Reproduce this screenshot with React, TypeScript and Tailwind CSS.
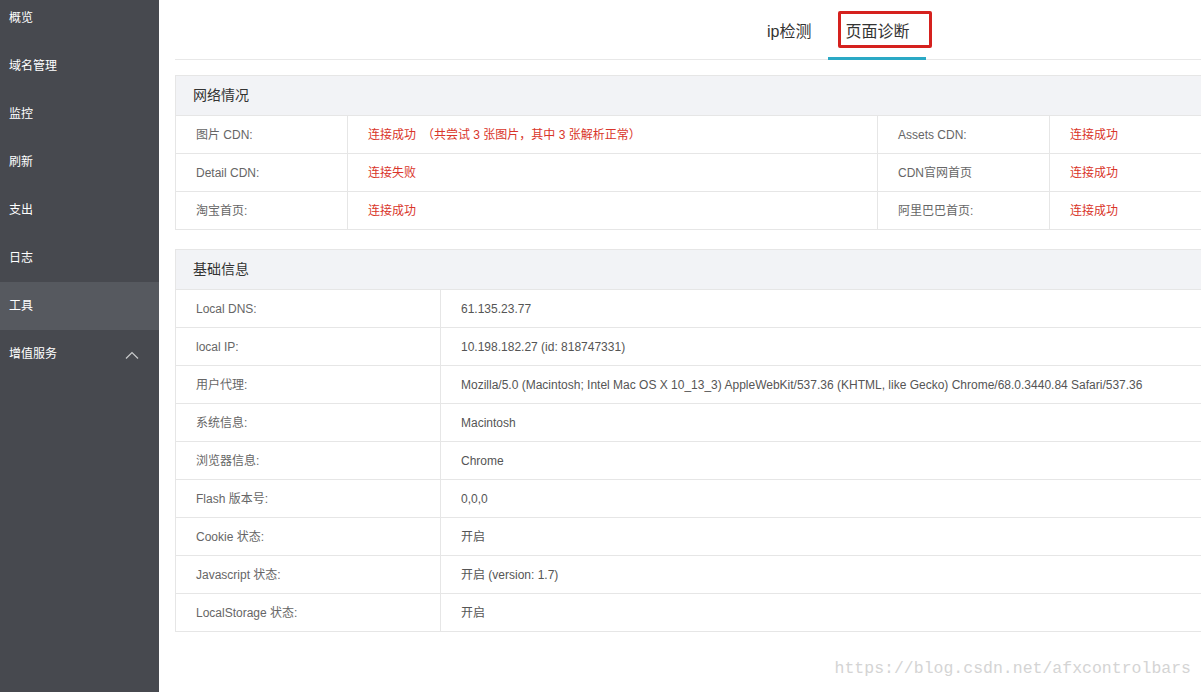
import React from "react";

const font = { fontFamily: '"Liberation Sans", "Noto Sans CJK SC", sans-serif' };

const navItems = ["概览", "域名管理", "监控", "刷新", "支出", "日志", "工具", "增值服务"];

const netRows = [
  ["图片 CDN:", "连接成功　（共尝试 3 张图片，其中 3 张解析正常）", "Assets CDN:", "连接成功"],
  ["Detail CDN:", "连接失败", "CDN官网首页", "连接成功"],
  ["淘宝首页:", "连接成功", "阿里巴巴首页:", "连接成功"],
];

const baseRows = [
  ["Local DNS:", "61.135.23.77"],
  ["local IP:", "10.198.182.27 (id: 818747331)"],
  ["用户代理:", "Mozilla/5.0 (Macintosh; Intel Mac OS X 10_13_3) AppleWebKit/537.36 (KHTML, like Gecko) Chrome/68.0.3440.84 Safari/537.36"],
  ["系统信息:", "Macintosh"],
  ["浏览器信息:", "Chrome"],
  ["Flash 版本号:", "0,0,0"],
  ["Cookie 状态:", "开启"],
  ["Javascript 状态:", "开启 (version: 1.7)"],
  ["LocalStorage 状态:", "开启"],
];

export default function App() {
  return (
    <div className="flex h-[692px] w-[1201px] overflow-hidden bg-white" style={font}>
      <aside className="w-[159px] flex-none bg-[#47494f] text-white">
        <div className="-mt-[6px]">
          {navItems.map((n) => (
            <div
              key={n}
              className={`flex h-[48px] items-center justify-between pl-[9px] pr-[20px] text-[12px] ${n === "工具" ? "bg-[#56595f]" : ""}`}
            >
              <span>{n}</span>
              {n === "增值服务" && (
                <svg width="14" height="8" viewBox="0 0 14 8" className="mt-[2px]">
                  <polyline points="1,7.5 7,1.5 13,7.5" fill="none" stroke="#c9cacc" strokeWidth="1.2" />
                </svg>
              )}
            </div>
          ))}
        </div>
      </aside>
      <main className="relative min-w-0 flex-1 overflow-hidden pl-[16px]">
        <div className="relative flex h-[60px] items-end border-b border-[#e8e8e8] pl-[575px]">
          <div className="flex h-[59px] items-center px-[17px] pt-[5px] text-[16px] text-[#333]">ip检测</div>
          <div className="relative flex h-[59px] items-center px-[17px] pt-[5px] text-[16px] text-[#333]">
            页面诊断
            <div className="absolute bottom-[-1px] left-0 right-0 h-[3px] bg-[#2aa9c5]" />
          </div>
          <div className="absolute left-[663px] top-[11px] h-[37px] w-[94px] rounded-[2px] border-[3px] border-[#d5211e]" />
        </div>

        <section className="mt-[15px] w-[1060px] border border-[#e6e6e6]">
          <div className="flex h-[39px] items-center bg-[#f2f3f6] pl-[17px] text-[14px] text-[#333]">网络情况</div>
          {netRows.map((r, i) => (
            <div key={i} className="flex h-[38px] border-t border-[#e6e6e6] text-[12px]">
              <div className="flex w-[172px] flex-none items-center border-r border-[#e6e6e6] pl-[20px] text-[#666]">{r[0]}</div>
              <div className="flex w-[530px] flex-none items-center border-r border-[#e6e6e6] pl-[20px] text-[#d9352a]">{r[1]}</div>
              <div className="flex w-[172px] flex-none items-center border-r border-[#e6e6e6] pl-[20px] text-[#666]">{r[2]}</div>
              <div className="flex flex-1 items-center pl-[20px] text-[#d9352a]">{r[3]}</div>
            </div>
          ))}
        </section>

        <section className="mt-[19px] w-[1060px] border border-[#e6e6e6]">
          <div className="flex h-[39px] items-center bg-[#f2f3f6] pl-[17px] text-[14px] text-[#333]">基础信息</div>
          {baseRows.map((r, i) => (
            <div key={i} className="flex h-[38px] border-t border-[#e6e6e6] text-[12px] text-[#555]">
              <div className="flex w-[265px] flex-none items-center border-r border-[#e6e6e6] pl-[20px] text-[#666]">{r[0]}</div>
              <div className="flex flex-1 items-center whitespace-nowrap pl-[20px]">{r[1]}</div>
            </div>
          ))}
        </section>

        <div
          className="absolute bottom-[10px] right-[10px] text-[16.5px] text-[#d4d4d4]"
          style={{ fontFamily: '"Liberation Mono", monospace' }}
        >
          https://blog.csdn.net/afxcontrolbars
        </div>
      </main>
    </div>
  );
}
